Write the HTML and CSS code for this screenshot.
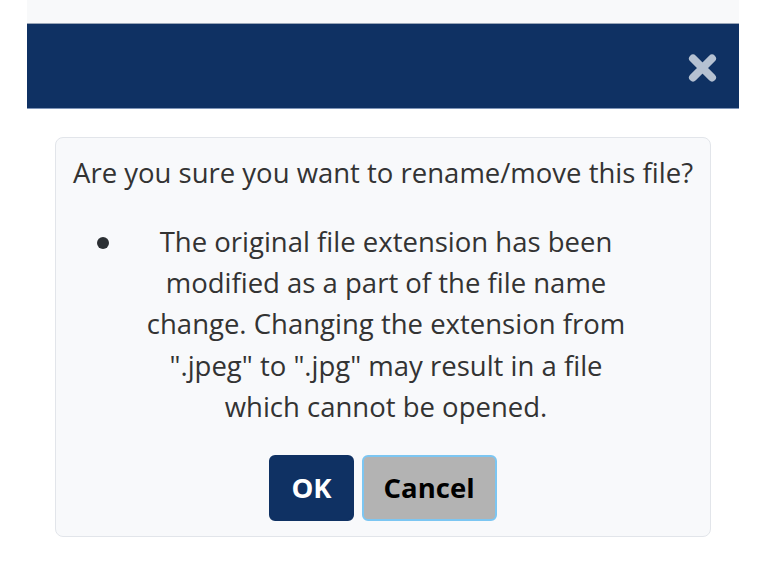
FILE: index.html
```html
<!DOCTYPE html>
<html lang="en">
<head>
<meta charset="utf-8">
<title>Rename file</title>
<link rel="stylesheet" href="styles.css">
</head>
<body>
<div class="frame">
  <div class="topbar"></div>
  <div class="header">
    <button class="close" aria-label="Close">
      <svg width="29" height="28" viewBox="0 0 29 28" aria-hidden="true">
        <path d="M5 4.5 L24 23.5 M24 4.5 L5 23.5" stroke="#b5c1d2" stroke-width="8" stroke-linecap="round" fill="none"/>
      </svg>
    </button>
  </div>
  <div class="card">
    <p class="question">Are you sure you want to rename/move this file?</p>
    <ul class="warnings">
      <li class="warning"><span class="warning-text">The original file extension has been modified as a part of the file name change. Changing the extension from ".jpeg" to ".jpg" may result in a file which cannot be opened.</span></li>
    </ul>
    <div class="actions">
      <button class="btn btn-ok">OK</button>
      <button class="btn btn-cancel">Cancel</button>
    </div>
  </div>
</div>
</body>
</html>
```

FILE: styles.css
```css
html, body {
  margin: 0;
  padding: 0;
  background: #ffffff;
}

body {
  font-family: "Open Sans", "Noto Sans", sans-serif;
  color: #333333;
}

.frame {
  width: 712px;
  margin-left: 27px;
}

.topbar {
  height: 23px;
  background: #f8f9fa;
}

.header {
  height: 84px;
  background: #0f3163;
  border-top: 1px solid #9aa6b8;
  border-bottom: 1px solid #7f95b8;
  display: flex;
  align-items: center;
  justify-content: flex-end;
  padding-right: 22px;
}

.close {
  background: none;
  border: none;
  padding: 0;
  margin: 3px 0 0 0;
  width: 29px;
  height: 28px;
  display: flex;
  cursor: pointer;
}

.card {
  margin: 28px 28px 0 28px;
  background: #f8f9fb;
  border: 1px solid #e2e5ea;
  border-radius: 8px;
  padding: 14px 14px 15px 14px;
  text-align: center;
  font-size: 27.5px;
  line-height: 1.5;
}

.question {
  margin: 0 0 27.5px 0;
  white-space: nowrap;
}

.warnings {
  margin: 0 0 27.5px 0;
  padding: 0;
  list-style: none;
}

.warning {
  display: flex;
  align-items: flex-start;
}

.warning::before {
  content: "";
  flex: none;
  width: 12px;
  height: 12px;
  border-radius: 50%;
  background: #2b2f33;
  margin: 16px 27px 0 27px;
}

.warning-text {
  width: 500px;
  flex: none;
  text-align: center;
}

.actions {
  display: flex;
  justify-content: center;
  gap: 8px;
}

.btn {
  font-family: "Open Sans", "Noto Sans", sans-serif;
  font-weight: 700;
  font-size: 27.5px;
  line-height: 41px;
  padding: 10.5px 20px;
  border-radius: 6px;
  cursor: pointer;
}

.btn-ok {
  background: #0f3163;
  color: #ffffff;
  border: 2px solid #0f3163;
}

.btn-cancel {
  background: #b3b3b3;
  color: #000000;
  border: 2px solid #7cc6f2;
}
```
